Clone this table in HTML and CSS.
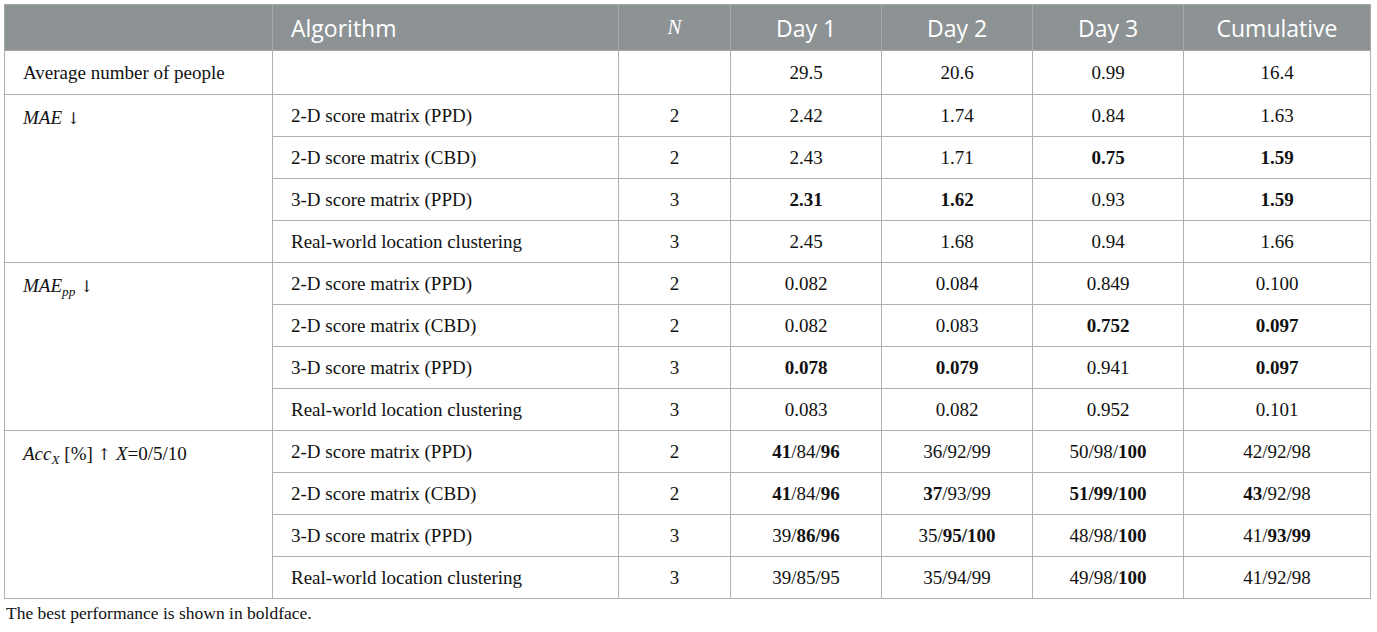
FILE: index.html
```html
<!DOCTYPE html>
<html lang="en">
<head>
    <meta charset="UTF-8">
    <meta name="viewport" content="width=device-width, initial-scale=1.0">
    <title>Counting results</title>
    <link rel="stylesheet" href="styles.css">
</head>
<body>
    <table class="results">
        <colgroup>
            <col class="col-metric">
            <col class="col-algo">
            <col class="col-n">
            <col class="col-day">
            <col class="col-day">
            <col class="col-day">
            <col class="col-cum">
        </colgroup>
        <thead>
            <tr class="head-row">
                <th></th>
                <th class="left">Algorithm</th>
                <th class="n-head">N</th>
                <th>Day 1</th>
                <th>Day 2</th>
                <th>Day 3</th>
                <th>Cumulative</th>
            </tr>
        </thead>
        <tbody>
            <tr class="avg-row">
                <td class="metric">Average number of people</td>
                <td></td>
                <td></td>
                <td class="num">29.5</td>
                <td class="num">20.6</td>
                <td class="num">0.99</td>
                <td class="num">16.4</td>
            </tr>

            <!-- MAE -->
            <tr>
                <td class="metric" rowspan="4"><i>MAE</i> <span class="arrow">↓</span></td>
                <td class="algo">2-D score matrix (PPD)</td>
                <td class="num">2</td>
                <td class="num">2.42</td>
                <td class="num">1.74</td>
                <td class="num">0.84</td>
                <td class="num">1.63</td>
            </tr>
            <tr>
                <td class="algo">2-D score matrix (CBD)</td>
                <td class="num">2</td>
                <td class="num">2.43</td>
                <td class="num">1.71</td>
                <td class="num"><b>0.75</b></td>
                <td class="num"><b>1.59</b></td>
            </tr>
            <tr>
                <td class="algo">3-D score matrix (PPD)</td>
                <td class="num">3</td>
                <td class="num"><b>2.31</b></td>
                <td class="num"><b>1.62</b></td>
                <td class="num">0.93</td>
                <td class="num"><b>1.59</b></td>
            </tr>
            <tr>
                <td class="algo">Real-world location clustering</td>
                <td class="num">3</td>
                <td class="num">2.45</td>
                <td class="num">1.68</td>
                <td class="num">0.94</td>
                <td class="num">1.66</td>
            </tr>

            <!-- MAE per person -->
            <tr>
                <td class="metric" rowspan="4"><i>MAE<sub>pp</sub></i> <span class="arrow">↓</span></td>
                <td class="algo">2-D score matrix (PPD)</td>
                <td class="num">2</td>
                <td class="num">0.082</td>
                <td class="num">0.084</td>
                <td class="num">0.849</td>
                <td class="num">0.100</td>
            </tr>
            <tr>
                <td class="algo">2-D score matrix (CBD)</td>
                <td class="num">2</td>
                <td class="num">0.082</td>
                <td class="num">0.083</td>
                <td class="num"><b>0.752</b></td>
                <td class="num"><b>0.097</b></td>
            </tr>
            <tr>
                <td class="algo">3-D score matrix (PPD)</td>
                <td class="num">3</td>
                <td class="num"><b>0.078</b></td>
                <td class="num"><b>0.079</b></td>
                <td class="num">0.941</td>
                <td class="num"><b>0.097</b></td>
            </tr>
            <tr>
                <td class="algo">Real-world location clustering</td>
                <td class="num">3</td>
                <td class="num">0.083</td>
                <td class="num">0.082</td>
                <td class="num">0.952</td>
                <td class="num">0.101</td>
            </tr>

            <!-- Accuracy -->
            <tr>
                <td class="metric" rowspan="4"><i>Acc<sub>X</sub></i> [%] <span class="arrow">↑</span> <i>X</i>=0/5/10</td>
                <td class="algo">2-D score matrix (PPD)</td>
                <td class="num">2</td>
                <td class="num"><b>41</b>/84/<b>96</b></td>
                <td class="num">36/92/99</td>
                <td class="num">50/98/<b>100</b></td>
                <td class="num">42/92/98</td>
            </tr>
            <tr>
                <td class="algo">2-D score matrix (CBD)</td>
                <td class="num">2</td>
                <td class="num"><b>41</b>/84/<b>96</b></td>
                <td class="num"><b>37</b>/93/99</td>
                <td class="num"><b>51/99/100</b></td>
                <td class="num"><b>43</b>/92/98</td>
            </tr>
            <tr>
                <td class="algo">3-D score matrix (PPD)</td>
                <td class="num">3</td>
                <td class="num">39/<b>86/96</b></td>
                <td class="num">35/<b>95/100</b></td>
                <td class="num">48/98/<b>100</b></td>
                <td class="num">41/<b>93/99</b></td>
            </tr>
            <tr>
                <td class="algo">Real-world location clustering</td>
                <td class="num">3</td>
                <td class="num">39/85/95</td>
                <td class="num">35/94/99</td>
                <td class="num">49/98/<b>100</b></td>
                <td class="num">41/92/98</td>
            </tr>
        </tbody>
    </table>
    <p class="footnote">The best performance is shown in boldface.</p>
</body>
</html>
```

FILE: styles.css
```css
body {
    margin: 4px;
    background-color: #fff;
    color: #111;
    font-family: 'Liberation Serif', 'Times New Roman', serif;
}
.results {
    width: 1366px;
    table-layout: fixed;
    border-collapse: collapse;
    border: 1px solid #a8a8a8;
}
.col-metric { width: 268px; }
.col-algo { width: 346px; }
.col-n { width: 112px; }
.col-day { width: 151px; }
.col-cum { width: 187px; }

.results th,
.results td {
    border: 1px solid #b0b0b0;
    padding: 0 18px;
}
.results th {
    background-color: #8d9395;
    color: #fff;
    font-family: 'Open Sans', sans-serif;
    font-weight: 400;
    font-size: 23px;
    text-align: center;
    border-color: #a5a9ab;
}
.results th.left {
    text-align: left;
}
.results th.n-head {
    font-family: 'Liberation Serif', serif;
    font-style: italic;
    font-size: 21px;
}
.head-row { height: 46px; }
.results tbody tr { height: 42px; }
.results tbody tr.avg-row { height: 44px; }

.results td.metric {
    font-size: 19px;
    text-align: left;
    vertical-align: top;
    padding-top: 12px;
}
.results .avg-row td.metric {
    vertical-align: middle;
    padding-top: 0;
}
.arrow {
    font-family: 'DejaVu Serif', serif;
    font-size: 0.85em;
}
.algo {
    font-size: 19px;
    text-align: left;
}
.num {
    font-size: 19px;
    text-align: center;
}
sub {
    font-size: 0.7em;
    vertical-align: -0.3em;
    line-height: 0;
}
.footnote {
    margin: 4px 0 0 2px;
    font-size: 17.5px;
}
```
